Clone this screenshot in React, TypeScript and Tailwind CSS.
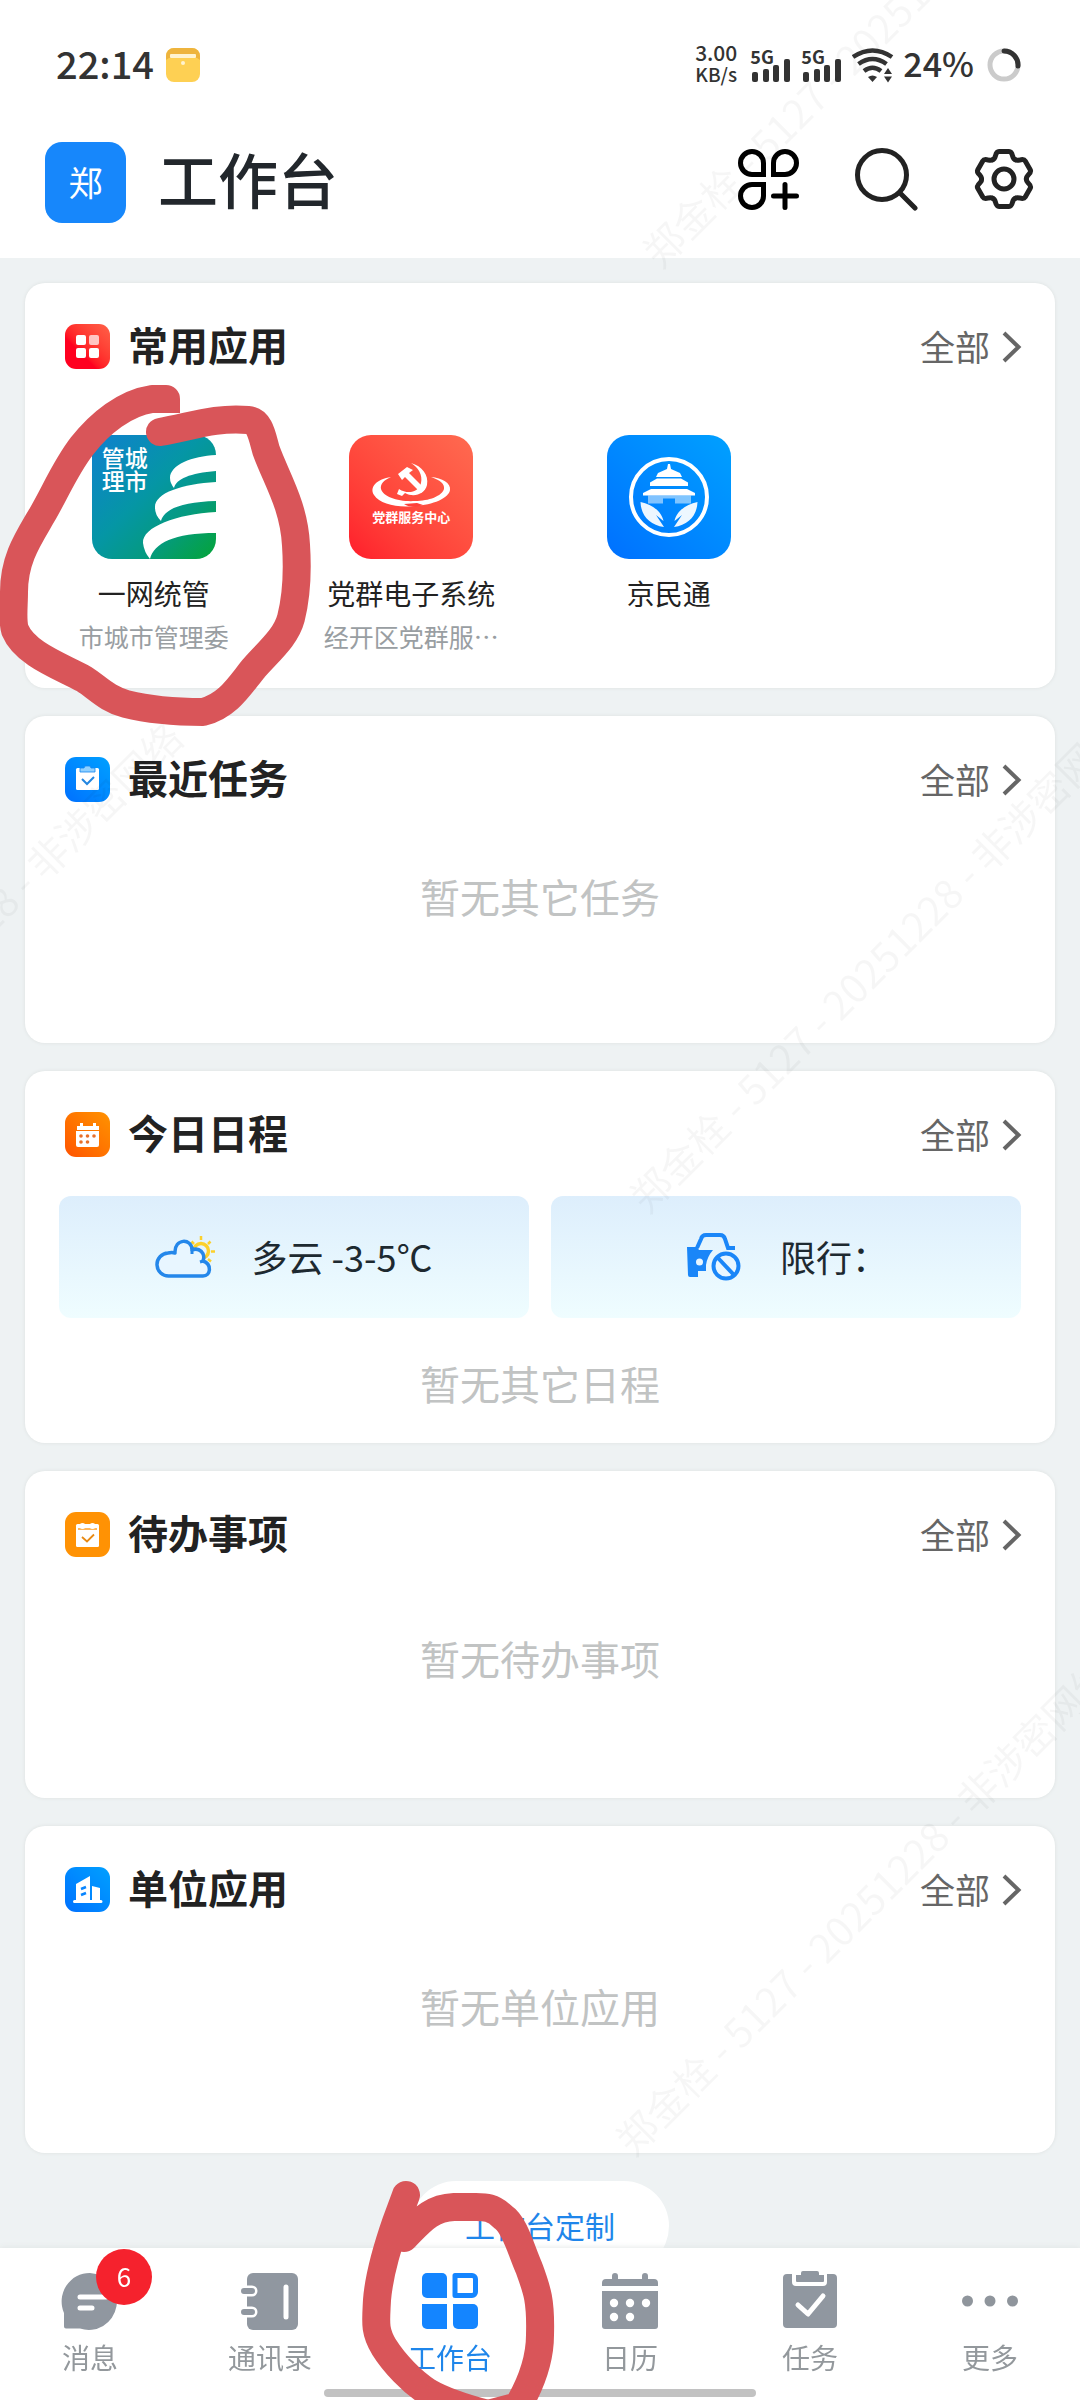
import type { ReactNode } from "react";

const apps = [
  { name: "一网统管", org: "市城市管理委", icon: <CityIcon /> },
  { name: "党群电子系统", org: "经开区党群服…", icon: <PartyIcon /> },
  { name: "京民通", org: "", icon: <JingIcon /> },
];

const tabs = [
  { label: "消息", icon: <ChatIcon />, badge: 6 },
  { label: "通讯录", icon: <ContactsIcon /> },
  { label: "工作台", icon: <WorkIcon />, active: true },
  { label: "日历", icon: <CalendarIcon /> },
  { label: "任务", icon: <TaskIcon /> },
  { label: "更多", icon: <MoreIcon /> },
];

const watermarks = [
  { x: 661, y: 270 },
  { x: -296, y: 1223 },
  { x: 648, y: 1215 },
  { x: 634, y: 2158 },
];

/* ---------- status bar ---------- */

function SignalIcon() {
  return (
    <div className="flex flex-col">
      <span className="text-[18px] leading-[14px] font-bold">5G</span>
      <svg className="-mt-1 ml-0.5 h-[23px] w-10" viewBox="0 0 40 23" fill="#333">
        <rect x="0" y="13" width="6" height="10" rx="2" />
        <rect x="11" y="10" width="6" height="13" rx="2" />
        <rect x="21" y="6" width="6" height="17" rx="2" />
        <rect x="32" y="0" width="6" height="23" rx="2" />
      </svg>
    </div>
  );
}

function StatusBar() {
  return (
    <div className="flex h-[118px] items-center justify-between pt-3 pr-[59px] pl-14 text-[#333]">
      <div className="flex items-center gap-3">
        <span className="pb-1 text-[38px] leading-10 font-medium">22:14</span>
        <svg className="h-[34px] w-[34px]" viewBox="0 0 34 34">
          <rect width="34" height="34" rx="8" fill="#fed053" />
          <path d="M0 12V8a8 8 0 0 1 8-8h18a8 8 0 0 1 8 8v4l-3-2H3z" fill="#eeb43d" />
          <rect x="4" y="6" width="26" height="4" rx="1" fill="#fff3cf" />
          <circle cx="17" cy="15" r="2" fill="#fff3cf" />
        </svg>
      </div>
      <div className="flex items-center gap-[9px]">
        <div className="mr-1 flex flex-col items-center pb-1 font-medium">
          <span className="text-[21px] leading-[22px]">3.00</span>
          <span className="text-[19px] leading-[22px]">KB/s</span>
        </div>
        <SignalIcon />
        <SignalIcon />
        <svg className="h-9 w-[42px]" viewBox="0 0 42 36" fill="none" stroke="#333" strokeWidth="4.500">
          <path d="M1 10Q20.500 -3 40 10" />
          <path d="M6.500 17Q20.500 7 34.500 17" />
          <path d="M12 24Q20.500 17.500 29 24" />
          <path d="M16 30q4.500-3 9 0l-4.500 5z" fill="#333" stroke="none" />
          <path d="M32 27l4-6 4 6zM32 29.500l4 6 4-6z" fill="#333" stroke="none" />
        </svg>
        <span className="pb-1 text-[34px] leading-10 font-medium">24%</span>
        <svg className="ml-1 h-[34px] w-[34px]" viewBox="0 0 34 34" fill="none" strokeWidth="5">
          <circle cx="17" cy="17" r="14" stroke="#cbcbcb" />
          <path d="M17 3a14 14 0 0 1 14 15" stroke="#333" strokeLinecap="round" />
        </svg>
      </div>
    </div>
  );
}

/* ---------- header ---------- */

function AddAppIcon() {
  return (
    <svg className="h-[61px] w-[61px]" viewBox="0 0 61 61" fill="none" stroke="#000" strokeWidth="5">
      <path d="M25.500 25.500H14A11.500 11.500 0 1 1 25.500 14z" />
      <path d="M35.500 25.500H47A11.500 11.500 0 1 0 35.500 14z" />
      <path d="M25.500 35.500H14A11.500 11.500 0 1 0 25.500 47z" />
      <path d="M47 35.500v23M35.500 47h23" strokeLinecap="round" />
    </svg>
  );
}

function SearchIcon() {
  return (
    <svg className="h-16 w-16" viewBox="0 0 64 64" fill="none" stroke="#222" strokeWidth="5" strokeLinecap="round">
      <circle cx="28" cy="28" r="24.500" />
      <path d="M46 46l15 15" />
    </svg>
  );
}

function GearIcon() {
  return (
    <svg className="h-[62px] w-[62px]" viewBox="-31 -31 62 62" fill="none" stroke="#222" strokeWidth="5" strokeLinecap="round">
      {[0, 60, 120, 180, 240, 300].map((deg) => (
        <path
          key={deg}
          transform={`rotate(${deg})`}
          d="M-11.200-19.400Q-9.500-20-8.600-23Q-7.500-27.400-5-27.400H5Q7.500-27.400 8.600-23Q9.500-20 11.200-19.400"
        />
      ))}
      <circle r="10" />
    </svg>
  );
}

function Header() {
  return (
    <header className="bg-white">
      <StatusBar />
      <div className="flex h-[140px] items-center pr-[45px] pb-3 pl-[45px]">
        <div className="flex h-[81px] w-[81px] items-center justify-center rounded-[17px] bg-[#1787fb] text-[34px] leading-none text-white">
          郑
        </div>
        <h1 className="ml-8 pb-2 text-[60px] leading-none font-medium text-[#22272c]">工作台</h1>
        <div className="ml-auto flex items-center gap-[55px] pb-1.5">
          <button aria-label="添加应用"><AddAppIcon /></button>
          <button aria-label="搜索"><SearchIcon /></button>
          <button aria-label="设置"><GearIcon /></button>
        </div>
      </div>
    </header>
  );
}

/* ---------- app icons ---------- */

function CityIcon() {
  return (
    <div className="relative h-[124px] w-[124px] overflow-hidden rounded-[20px]">
      <svg className="h-full w-full" viewBox="0 0 124 124">
        <defs>
          <linearGradient id="city" x1="0" y1="0" x2="1" y2="1">
            <stop offset="0" stopColor="#0f80cf" />
            <stop offset="0.45" stopColor="#0596a5" />
            <stop offset="0.7" stopColor="#059a80" />
            <stop offset="1" stopColor="#04a437" />
          </linearGradient>
        </defs>
        <rect width="124" height="124" fill="url(#city)" />
        <g fill="#fff">
          <path d="M124 20C100 21 78 30 78 43Q78 48 82 53C84 44 98 38 124 36z" />
          <path d="M124 47C90 49 62 58 63 73Q63 80 69 86C72 74 90 67 124 66z" />
          <path d="M124 77C85 79 50 92 51 108Q52 117 58 124C62 108 82 98 124 98z" />
        </g>
      </svg>
      <span className="absolute top-[11px] left-2.5 w-12 text-[23px] leading-[23px] font-medium text-white">管城理市</span>
    </div>
  );
}

function PartyIcon() {
  return (
    <div className="relative h-[124px] w-[124px] rounded-[22px] bg-linear-to-tr from-[#ff1a2b] to-[#ff6a50]">
      <svg className="h-full w-full" viewBox="0 0 124 124" fill="#fff">
        <path d="M42 42C28 44 20 52 25 60C31 69 48 73 66 71C84 70 100 63 101 55C102 48 93 43 82 42C91 45 96 49 95 54C93 61 80 66 66 66C50 67 34 62 32 54C31 49 35 45 42 42z" />
        <path d="M62 28C73 31 80 40 78 50C76 59 65 63 56 58L53 61L48 59L50 54C59 60 70 57 72 48C74 40 69 32 62 28z" />
        <path d="M49 39L58 32L64 35L60 38L76 54L72 58L56 42L53 45z" />
        <path d="M55 69C61 73 68 72 74 70L68 68z" fill="#ff4039" />
      </svg>
      <span className="absolute inset-x-0 top-[74px] text-center text-[13px] leading-4 font-bold text-white">党群服务中心</span>
    </div>
  );
}

function JingIcon() {
  return (
    <div className="h-[124px] w-[124px] rounded-[22px] bg-linear-to-tr from-[#0070ff] to-[#00a0ff]">
      <svg className="h-full w-full" viewBox="0 0 124 124" fill="#fff">
        <circle cx="62" cy="62" r="38" fill="none" stroke="#fff" strokeWidth="4" />
        <path d="M61 29h2l1 5 9 4 2 4H49l2-4 9-4z" />
        <path d="M50 43.500h24l7 4v3.500H43v-3.500z" />
        <path d="M44 54h36l8 4v2.500H36v-2.500z" />
        <path d="M41 60.500h43v8H68v-5H56v5H41z" opacity="0.5" />
        <path d="M33.500 67C45 69 55 77 56.500 86L49 80L57 92C43 90 34 81 33.500 67z" opacity="0.93" />
        <path d="M90.500 67C79 69 69 77 67.500 86L75 80L67 92C81 90 90 81 90.500 67z" opacity="0.93" />
      </svg>
    </div>
  );
}

/* ---------- section icons ---------- */

function CommonIcon() {
  return (
    <svg className="h-[45px] w-[45px] rounded-[11px] bg-linear-to-tr from-[#ff0020] from-35% to-[#ff6048]" viewBox="0 0 45 45" fill="#fff">
      <rect x="11" y="11" width="10" height="10" rx="2" />
      <rect x="24" y="11" width="10" height="10" rx="2" opacity="0.7" />
      <rect x="11" y="24" width="10" height="10" rx="2" />
      <rect x="24" y="24" width="10" height="10" rx="2" />
    </svg>
  );
}

function RecentIcon() {
  return (
    <svg className="h-[45px] w-[45px] rounded-[11px] bg-linear-to-tr from-[#0070ff] to-[#00a0ff]" viewBox="0 0 45 45">
      <rect x="11" y="11" width="23" height="22" rx="1.500" fill="#fff" />
      <path d="M15 15v-4h4l1-2h5l1 2h4v4z" fill="#8fd0ff" stroke="#1187f0" strokeWidth="0.800" />
      <path d="M17 22l5 5 7-7" fill="none" stroke="#2386e0" strokeWidth="2" />
    </svg>
  );
}

function ScheduleIcon() {
  return (
    <svg className="h-[45px] w-[45px] rounded-[11px] bg-linear-to-tr from-[#ff5200] to-[#ff9200]" viewBox="0 0 45 45" fill="#fff">
      <path d="M12 14h3v-3h3v3h10v-3h3v3h3v4H12z" />
      <path d="M11 19h23v14a2 2 0 0 1-2 2H13a2 2 0 0 1-2-2z" />
      <g fill="#e8702a">
        <circle cx="16" cy="24" r="1.800" />
        <circle cx="22.500" cy="24" r="1.800" />
        <circle cx="29" cy="24" r="1.800" />
        <circle cx="16" cy="30" r="1.800" />
        <circle cx="22.500" cy="30" r="1.800" />
      </g>
    </svg>
  );
}

function TodoIcon() {
  return (
    <svg className="h-[45px] w-[45px] rounded-[11px] bg-[#ff9204]" viewBox="0 0 45 45">
      <rect x="11" y="12" width="23" height="23" rx="1.500" fill="#fff" />
      <path d="M13 17h19" stroke="#ffb75c" strokeWidth="2" />
      <circle cx="17.500" cy="14" r="3" fill="#fff" />
      <circle cx="27.500" cy="14" r="3" fill="#fff" />
      <path d="M17 25l5 4.500 7-7" fill="none" stroke="#e88a14" strokeWidth="1.800" />
    </svg>
  );
}

function UnitIcon() {
  return (
    <svg className="h-[45px] w-[45px] rounded-[11px] bg-linear-to-tr from-[#0070ff] to-[#00a0ff]" viewBox="0 0 45 45" fill="#fff">
      <path d="M11 33V17L25 9v24h2V19l8 2v12h1a1.500 1.500 0 0 1 0 3H9.500a1.500 1.500 0 0 1 0-3z" />
      <path d="M16 22l5-2M16 28l5-2" stroke="#0a86ff" strokeWidth="2.500" />
    </svg>
  );
}

/* ---------- schedule tiles ---------- */

function CloudIcon() {
  return (
    <svg className="h-12 w-[60px]" viewBox="0 0 60 48" fill="none">
      <circle cx="46" cy="18" r="7.500" stroke="#fcd02c" strokeWidth="3.500" />
      <path d="M46 3v4M55.500 8.500l-2.500 2.500M36.500 8.500l2.500 2.500M56 18.500h4M53 26l3 2.500" stroke="#fcd02c" strokeWidth="2.500" />
      <path
        d="M14 43A11.500 11.500 0 0 1 13 20Q17 19 20 20C19 5 37 5 37 17C44 14 51 20 48 28C57 31 56 43 48 43z"
        fill="#e8f6ff"
        stroke="#2487ea"
        strokeWidth="3.500"
        strokeLinejoin="round"
      />
      <path d="M37 17v4M48 28l-3 1" stroke="#2487ea" strokeWidth="3" />
    </svg>
  );
}

function CarLimitIcon() {
  return (
    <svg className="h-12 w-[60px]" viewBox="0 0 60 48" fill="#1a86f8">
      <path d="M13 15l4-9Q18 2 22 2H36Q40 2 41 6L44 15H51" fill="none" stroke="#1a86f8" strokeWidth="4" />
      <path d="M3 14h10l2 3h14Q23 24 22 32v6h-8v6H6q-2 0-2-2z" />
      <circle cx="15.500" cy="29" r="3.500" fill="#e8f6ff" />
      <circle cx="42" cy="33" r="12.500" fill="#e8f6ff" stroke="#1a86f8" strokeWidth="4" />
      <path d="M34 25l16 17" stroke="#1a86f8" strokeWidth="4" />
    </svg>
  );
}

function Tile({ icon, text }: { icon: ReactNode; text: string }) {
  return (
    <div className="flex h-[122px] flex-1 items-center justify-center gap-9 rounded-xl bg-linear-to-b from-[#ddeefc] to-[#effdff] text-[36px] text-[#1d2930]">
      {icon}
      <span className="pb-0.5">{text}</span>
    </div>
  );
}

/* ---------- cards ---------- */

function Card({ icon, title, children }: { icon: ReactNode; title: string; children: ReactNode }) {
  return (
    <section className="rounded-[20px] bg-white pt-[41px] shadow-[0_0_3px_1px_#e3e7e7]">
      <div className="flex h-[45px] items-center pr-[33px] pl-10">
        {icon}
        <h2 className="ml-[18px] pb-1 text-[40px] leading-[45px] font-bold text-[#222]">{title}</h2>
        <a href="#" className="ml-auto flex items-center gap-3 text-[35px] leading-[45px] text-[#666]">
          <span className="pb-0.5">全部</span>
          <svg className="h-8 w-5" viewBox="0 0 20 32" fill="none" stroke="#666" strokeWidth="4">
            <path d="M2 2l14.500 14L2 30" />
          </svg>
        </a>
      </div>
      {children}
    </section>
  );
}

function Empty({ text }: { text: string }) {
  return <p className="pb-1 text-center text-[40px] leading-[44px] text-[#c1c3c3]">{text}</p>;
}

/* ---------- tab bar ---------- */

function ChatIcon() {
  return (
    <svg className="h-[60px] w-[60px]" viewBox="0 0 60 60" fill="#9097a0">
      <path d="M30 2a28 28.500 0 1 1-10 55.500H6q-2 0-2-2V42A28 28.500 0 0 1 30 2z" />
      <path d="M20 26h26M20 37h12" stroke="#fff" strokeWidth="5" strokeLinecap="round" />
    </svg>
  );
}

function ContactsIcon() {
  return (
    <svg className="h-[60px] w-[60px]" viewBox="0 0 60 60" fill="#9097a0">
      <rect x="7" y="2" width="51" height="57" rx="6" />
      <path d="M7 20h5M7 41h5" stroke="#fff" strokeWidth="11" strokeLinecap="round" />
      <path d="M4 20h8M4 41h8" stroke="#9097a0" strokeWidth="6" strokeLinecap="round" />
      <path d="M46 16v30" stroke="#fff" strokeWidth="5" strokeLinecap="round" />
    </svg>
  );
}

function WorkIcon() {
  return (
    <svg className="h-[60px] w-[60px]" viewBox="0 0 60 60" fill="#1485ff">
      <path d="M7 2h15a5 5 0 0 1 5 5v20H7a5 5 0 0 1-5-5V7a5 5 0 0 1 5-5z" />
      <path d="M35 4.500h17a3.500 3.500 0 0 1 3.500 3.500v13a3.500 3.500 0 0 1-3.500 3.500H35z" fill="none" stroke="#1485ff" strokeWidth="5" strokeLinejoin="round" />
      <path d="M2 33h25v25H7a5 5 0 0 1-5-5z" />
      <path d="M33 33h20a5 5 0 0 1 5 5v15a5 5 0 0 1-5 5H38a5 5 0 0 1-5-5z" />
    </svg>
  );
}

function CalendarIcon() {
  return (
    <svg className="h-[60px] w-[60px]" viewBox="0 0 60 60" fill="#9097a0">
      <path d="M2 15v-3q0-4 4-4h6V5a3 3 0 0 1 6 0v3h24V5a3 3 0 0 1 6 0v3h6q4 0 4 4v3z" />
      <path d="M2 20h56v35q0 3-3 3H5q-3 0-3-3z" />
      <g fill="#fff">
        <circle cx="14" cy="32" r="4.200" />
        <circle cx="30" cy="32" r="4.200" />
        <circle cx="46" cy="32" r="4.200" />
        <circle cx="14" cy="46" r="4.200" />
        <circle cx="30" cy="46" r="4.200" />
      </g>
    </svg>
  );
}

function TaskIcon() {
  return (
    <svg className="h-[60px] w-[60px]" viewBox="0 0 60 60" fill="#9097a0">
      <path d="M7 3h5v8q0 4 4 4h27q4 0 4-4V3h6q4 0 4 4v46q0 4-4 4H7q-4 0-4-4V7q0-4 4-4z" />
      <path d="M16 4h5V2q0-2 2-2h14q2 0 2 2v2h5v6q0 1-1 1H17q-1 0-1-1z" />
      <path d="M18 34l10 9 15-18" fill="none" stroke="#fff" strokeWidth="5" strokeLinecap="round" strokeLinejoin="round" />
    </svg>
  );
}

function MoreIcon() {
  return (
    <svg className="h-[60px] w-[60px]" viewBox="0 0 60 60" fill="#8f959c">
      <circle cx="7.500" cy="30" r="5.500" />
      <circle cx="30" cy="30" r="5.500" />
      <circle cx="52.500" cy="30" r="5.500" />
    </svg>
  );
}

function TabBar() {
  return (
    <nav className="fixed inset-x-0 bottom-0 bg-white shadow-[0_0_6px_#dfe3e3]">
      <div className="grid grid-cols-6 pt-[23px] pb-7">
        {tabs.map((tab) => (
          <a key={tab.label} href="#" className="flex flex-col items-center gap-[11px]">
            <span className="relative">
              {tab.icon}
              {tab.badge && (
                <span className="absolute -top-[22px] left-9 flex h-14 w-14 items-center justify-center rounded-full bg-[#f5222d] pb-0.5 text-[26px] leading-none text-white">
                  {tab.badge}
                </span>
              )}
            </span>
            <span className={tab.active ? "text-[28px] leading-[30px] text-[#1f86ea]" : "text-[28px] leading-[30px] text-[#93989c]"}>
              {tab.label}
            </span>
          </a>
        ))}
      </div>
      <div className="absolute bottom-[3px] left-1/2 h-2 w-2/5 -translate-x-1/2 rounded-full bg-[#c2c2c2]" />
    </nav>
  );
}

/* Security watermark and the hand-drawn red marks, above everything else */
function Overlay() {
  return (
    <svg
      className="pointer-events-none absolute inset-0 h-full w-full"
      viewBox="0 0 1080 2400"
      preserveAspectRatio="xMinYMin meet"
      fill="none"
    >
      <g fill="#000" fillOpacity="0.035" fontSize="40">
        {watermarks.map((w) => (
          <text key={w.y} transform={`translate(${w.x} ${w.y}) rotate(-45)`}>
            郑金栓 - 5127 - 20251228 - 非涉密网络
          </text>
        ))}
      </g>
      <g stroke="#d95559" strokeWidth="28" strokeLinecap="round" strokeLinejoin="round">
        <path d="M166 399H152C125 403 100 423 82 446C65 468 55 493 42 515C28 539 14 559 14 592C14 606 12 621 15 630C25 654 60 666 84 679C98 688 107 699 126 704C150 710 180 712 203 712C228 706 240 685 254 668C270 650 286 637 291 618C298 590 297 560 296 545C294 505 276 478 266 450C262 436 260 421 248 420C215 417 190 427 160 432" />
        <path d="M406 2195L396 2222C388 2245 379 2275 377 2300C376 2322 374 2330 384 2347C394 2363 412 2382 428 2392C440 2399 465 2408 488 2414L518 2406C532 2382 540 2360 540 2335C541 2300 537 2290 529 2268C521 2250 515 2225 503 2217C493 2207 485 2207 476 2207H454C430 2208 420 2222 404 2238" />
      </g>
      <path d="M160 399h20v14h-20z" fill="#d95559" />
    </svg>
  );
}

export default function App() {
  return (
    <div className="relative min-h-screen bg-[#eef2f3] font-['Noto_Sans_CJK_SC',sans-serif]">
      <Header />
      <main className="flex flex-col gap-7 px-[25px] pt-[25px] pb-32">
        <Card icon={<CommonIcon />} title="常用应用">
          <div className="grid grid-cols-4 pt-[66px] pb-[38px]">
            {apps.map((app) => (
              <a key={app.name} href="#" className="flex flex-col items-center">
                {app.icon}
                <span className="mt-5 text-[28px] leading-7 text-[#222]">{app.name}</span>
                <span className="mt-[15px] text-[25px] leading-7 text-[#999ea2]">{app.org}</span>
              </a>
            ))}
          </div>
        </Card>

        <Card icon={<RecentIcon />} title="最近任务">
          <div className="pt-[72px] pb-[121px]">
            <Empty text="暂无其它任务" />
          </div>
        </Card>

        <Card icon={<ScheduleIcon />} title="今日日程">
          <div className="flex gap-[22px] px-[34px] pt-[39px]">
            <Tile icon={<CloudIcon />} text="多云 -3-5℃" />
            <Tile icon={<CarLimitIcon />} text="限行：" />
          </div>
          <div className="pt-[43px] pb-[34px]">
            <Empty text="暂无其它日程" />
          </div>
        </Card>

        <Card icon={<TodoIcon />} title="待办事项">
          <div className="pt-[79px] pb-[114px]">
            <Empty text="暂无待办事项" />
          </div>
        </Card>

        <Card icon={<UnitIcon />} title="单位应用">
          <div className="pt-[72px] pb-[121px]">
            <Empty text="暂无单位应用" />
          </div>
        </Card>

        <button className="h-[90px] w-[258px] self-center rounded-full bg-white pb-0.5 text-[30px] text-[#1f86ea]">
          工作台定制
        </button>
      </main>
      <TabBar />
      <Overlay />
    </div>
  );
}
